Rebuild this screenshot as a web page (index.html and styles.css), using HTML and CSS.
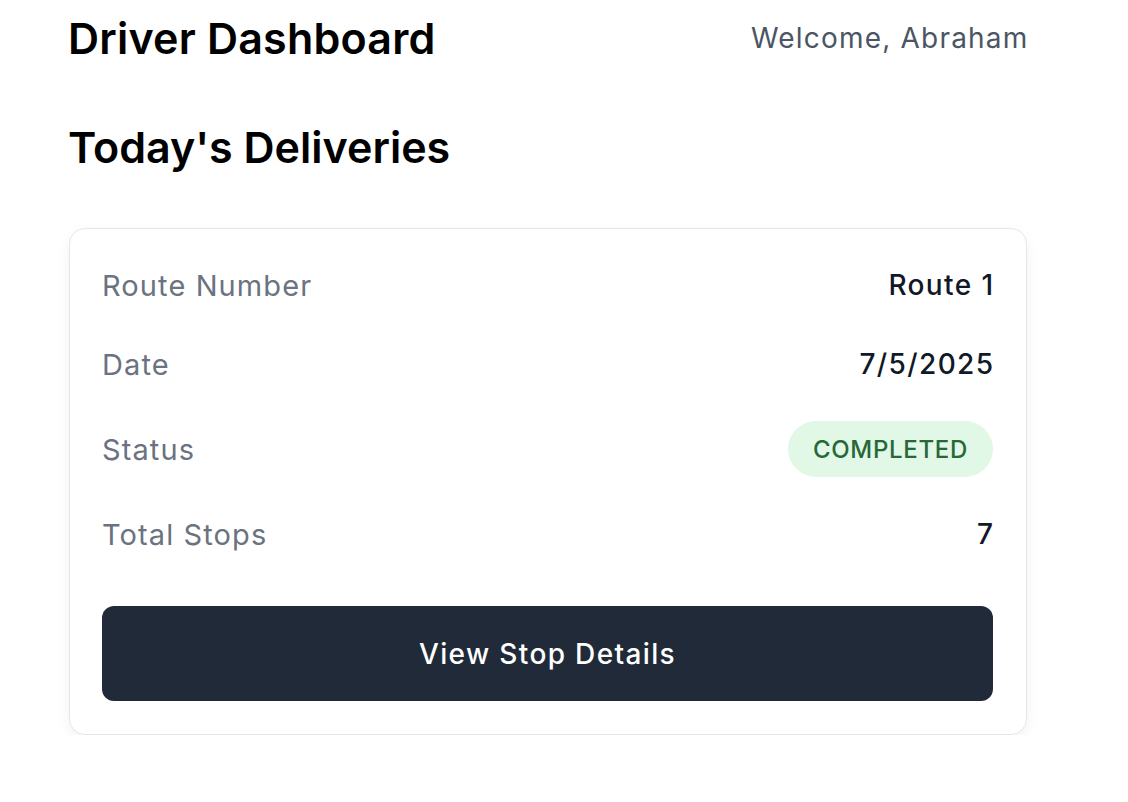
FILE: index.html
```html
<!DOCTYPE html>
<html lang="en">
<head>
<meta charset="utf-8">
<title>Driver Dashboard</title>
<link rel="stylesheet" href="styles.css">
</head>
<body>
<div class="page">
  <header class="header">
    <h1 class="title">Driver Dashboard</h1>
    <span class="welcome">Welcome, Abraham</span>
  </header>
  <h2 class="section-title">Today's Deliveries</h2>
  <div class="card">
    <div class="rows">
      <div class="row"><span class="label">Route Number</span><span class="value">Route 1</span></div>
      <div class="row"><span class="label">Date</span><span class="value">7/5/2025</span></div>
      <div class="row"><span class="label">Status</span><span class="badge">COMPLETED</span></div>
      <div class="row"><span class="label">Total Stops</span><span class="value">7</span></div>
    </div>
    <button class="btn">View Stop Details</button>
  </div>
</div>
</body>
</html>
```
FILE: styles.css
```css
* { box-sizing: border-box; }
html, body { margin: 0; padding: 0; background: #ffffff; }
body { font-family: Inter, "Noto Sans", sans-serif; color: #000; }
.page {
  width: 959px;
  margin-left: 68px;
  padding-top: 10px;
}
.header {
  display: flex;
  justify-content: space-between;
  align-items: center;
  height: 56px;
}
.title {
  margin: 0;
  font-size: 43px;
  font-weight: 600;
  letter-spacing: 0.2px;
  line-height: 56px;
}
.welcome {
  font-size: 28px;
  color: #4b5563;
  letter-spacing: 1.2px;
  margin-right: -1.5px;
}
.section-title {
  margin: 55px 0 0 0;
  font-size: 43px;
  font-weight: 600;
  letter-spacing: 0;
  line-height: 52px;
}
.card {
  margin-top: 55px;
  margin-left: 1px;
  width: 958px;
  border: 1.5px solid #e5e7eb;
  border-radius: 16px;
  padding: 34px 33px 33px 32px;
  box-shadow: 0 4px 14px rgba(0,0,0,0.05);
  background: #fff;
}
.rows {
  display: flex;
  flex-direction: column;
  gap: 35px;
}
.row {
  display: flex;
  justify-content: space-between;
  align-items: center;
  min-height: 44px;
}
.label {
  font-size: 29px;
  color: #6b7280;
  letter-spacing: 1.1px;
}
.value {
  font-size: 28px;
  font-weight: 500;
  color: #111827;
  letter-spacing: 1.4px;
  margin-right: -1.5px;
}
.badge {
  display: inline-flex;
  align-items: center;
  height: 56px;
  padding: 0 25px;
  border-radius: 28px;
  background: #e1f8e6;
  color: #276738;
  font-size: 24px;
  font-weight: 500;
  letter-spacing: 0.7px;
}
.btn {
  display: block;
  width: 100%;
  margin-top: 50px;
  height: 95px;
  border: none;
  border-radius: 12px;
  background: #212a39;
  color: #fff;
  font-family: Inter, "Noto Sans", sans-serif;
  font-size: 28px;
  font-weight: 500;
  letter-spacing: 1.35px;
}
```
